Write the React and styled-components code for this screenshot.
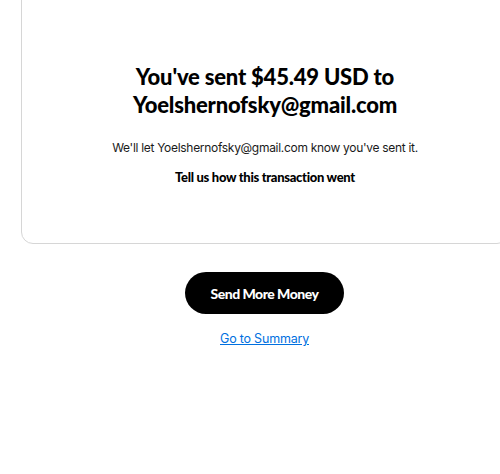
import React from "react";
import styled, { createGlobalStyle } from "styled-components";

const GlobalStyle = createGlobalStyle`
  html, body {
    margin: 0;
    padding: 0;
    background: #ffffff;
    overflow: hidden;
  }
  body {
    font-family: "Lato", "Liberation Sans", sans-serif;
    color: #000000;
  }
`;

const Page = styled.div`
  width: 500px;
  height: 474px;
  display: flex;
  flex-direction: column;
  align-items: flex-start;
`;

const Card = styled.section`
  box-sizing: border-box;
  margin-top: -14px;
  margin-left: 21px;
  width: 488px;
  flex-shrink: 0;
  padding: 76px 24px 57px;
  border: 1px solid #d6d6d6;
  border-radius: 12px;
  display: flex;
  flex-direction: column;
  align-items: center;
  text-align: center;
`;

const Heading = styled.h1`
  margin: 0;
  font-size: 22px;
  line-height: 28px;
  font-weight: 900;
  letter-spacing: -0.2px;
`;

const Note = styled.p`
  margin: 20px 0 0;
  font-family: "Inter", "Liberation Sans", sans-serif;
  font-size: 12px;
  line-height: 18px;
  letter-spacing: -0.3px;
  color: #1a1a1a;
`;

const Feedback = styled.p`
  margin: 11px 0 0;
  font-size: 13px;
  line-height: 18px;
  font-weight: 900;
  letter-spacing: -0.3px;
`;

const Actions = styled.div`
  align-self: stretch;
  margin-top: 28px;
  display: flex;
  flex-direction: column;
  align-items: center;
  gap: 17px;
  padding-left: 29px;
`;

const PrimaryButton = styled.button`
  width: 159px;
  height: 42px;
  border: none;
  border-radius: 21px;
  background: #000000;
  color: #ffffff;
  font-family: "Lato", "Liberation Sans", sans-serif;
  font-size: 14px;
  font-weight: 900;
  letter-spacing: -0.5px;
  cursor: pointer;
`;

const TextLink = styled.a`
  font-family: "Inter", "Liberation Sans", sans-serif;
  font-size: 12.5px;
  color: #0070e0;
  text-decoration: underline;
  letter-spacing: -0.2px;
`;

export default function App() {
  return (
    <>
      <GlobalStyle />
      <Page>
        <Card>
          <Heading>
            You've sent $45.49 USD to
            <br />
            Yoelshernofsky@gmail.com
          </Heading>
          <Note>We'll let Yoelshernofsky@gmail.com know you've sent it.</Note>
          <Feedback>Tell us how this transaction went</Feedback>
        </Card>
        <Actions>
          <PrimaryButton type="button">Send More Money</PrimaryButton>
          <TextLink href="#">Go to Summary</TextLink>
        </Actions>
      </Page>
    </>
  );
}
